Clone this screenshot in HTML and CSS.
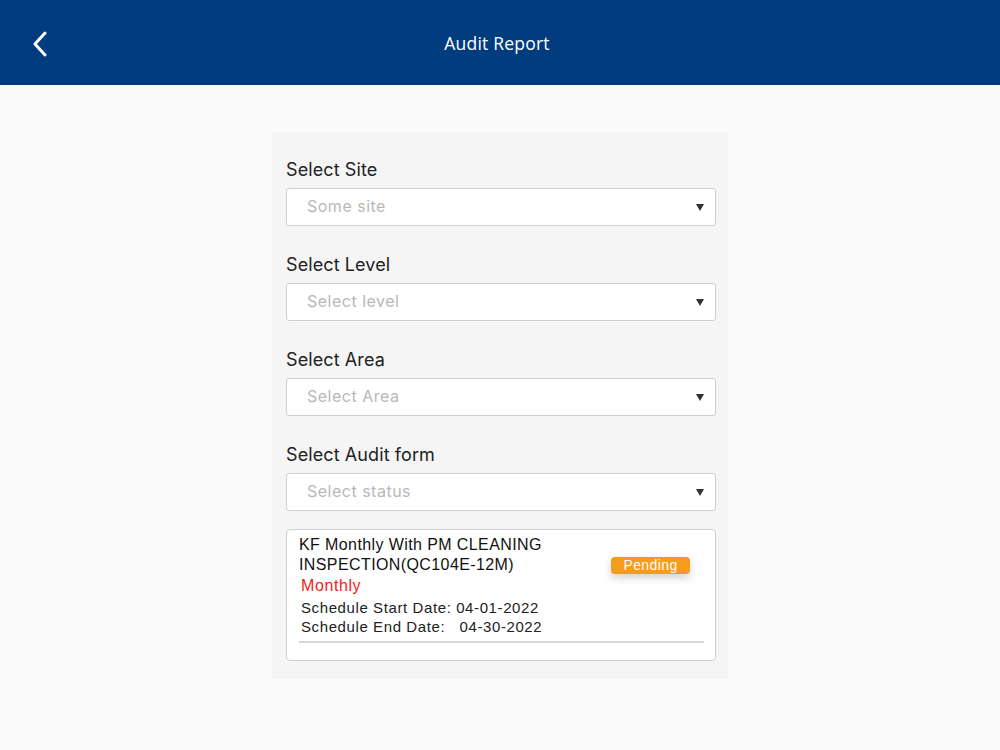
FILE: index.html
```html
<!doctype html>
<html lang="en">
  <head>
    <meta charset="UTF-8" />
    <meta name="viewport" content="width=device-width, initial-scale=1.0" />
    <title>Audit Report</title>
    <link rel="stylesheet" href="styles.css">
  </head>
  <body>
    <div class="app-header">
      <button class="back-btn" aria-label="Back">
        <svg width="16" height="26" viewBox="0 0 16 26">
          <path d="M13 2 L3 13 L13 24" fill="none" stroke="#fff" stroke-width="3" stroke-linecap="round" stroke-linejoin="round" />
        </svg>
      </button>
      <h1>Audit Report</h1>
      <span class="header-spacer"></span>
    </div>

    <div class="page">
      <div class="filter-panel">
        <div class="field">
          <label>Select Site</label>
          <div class="select-box">
            <span class="placeholder">Some site</span>
            <span class="caret"></span>
          </div>
        </div>
        <div class="field">
          <label>Select Level</label>
          <div class="select-box">
            <span class="placeholder">Select level</span>
            <span class="caret"></span>
          </div>
        </div>
        <div class="field">
          <label>Select Area</label>
          <div class="select-box">
            <span class="placeholder">Select Area</span>
            <span class="caret"></span>
          </div>
        </div>
        <div class="field">
          <label>Select Audit form</label>
          <div class="select-box">
            <span class="placeholder">Select status</span>
            <span class="caret"></span>
          </div>
        </div>

        <div class="audit-card">
          <div class="audit-row">
            <div class="audit-info">
              <div class="audit-title">KF Monthly With PM CLEANING INSPECTION(QC104E-12M)</div>
              <div class="audit-freq">Monthly</div>
              <div class="audit-date">Schedule Start Date: 04-01-2022</div>
              <div class="audit-date">Schedule End Date:&nbsp;&nbsp; 04-30-2022</div>
            </div>
            <span class="status-badge">Pending</span>
          </div>
          <div class="audit-divider"></div>
        </div>
      </div>
    </div>
  </body>
</html>
```

FILE: styles.css
```css
body {
  margin: 0;
  background-color: #fafafa;
  font-family: 'Inter', 'Open Sans', sans-serif;
}

.app-header {
  height: 85px;
  background-color: #003c7e;
  display: flex;
  align-items: center;
  padding: 0 28px;
  box-sizing: border-box;
}

.app-header h1 {
  flex-grow: 1;
  margin: 0;
  text-align: center;
  color: #fff;
  font-size: 17.5px;
  font-weight: 400;
  font-family: 'Open Sans', sans-serif;
  letter-spacing: 0.2px;
  padding-right: 6px;
}

.back-btn {
  width: 24px;
  height: 30px;
  padding: 0;
  border: none;
  background: none;
  display: flex;
  align-items: center;
  justify-content: center;
  margin-top: 2px;
}

.header-spacer {
  width: 24px;
}

.page {
  display: flex;
  justify-content: center;
  padding-top: 47px;
}

.filter-panel {
  width: 456px;
  box-sizing: border-box;
  background-color: #f5f5f5;
  padding: 25px 12px 18px 14px;
}

.field {
  margin-bottom: 26px;
}

.field label {
  display: block;
  height: 24px;
  line-height: 26px;
  font-size: 18px;
  color: #222;
  margin-bottom: 7px;
  letter-spacing: 0.1px;
}

.select-box {
  height: 38px;
  box-sizing: border-box;
  background-color: #fff;
  border: 1px solid #cfcfcf;
  border-radius: 3px;
  display: flex;
  align-items: center;
  padding: 0 11px 0 20px;
}

.placeholder {
  flex-grow: 1;
  color: #b8b8b8;
  font-size: 16px;
  letter-spacing: 0.5px;
  margin-top: -2px;
}

.caret {
  width: 0;
  height: 0;
  border-left: 4.5px solid transparent;
  border-right: 4.5px solid transparent;
  border-top: 7px solid #333;
  margin-top: 1px;
}

.field:nth-of-type(4) {
  margin-bottom: 18px;
}

.audit-card {
  background-color: #fff;
  border: 1px solid #cfcfcf;
  border-radius: 4px;
  padding: 5px 11px 17px 12px;
  font-family: 'Liberation Sans', Arial, sans-serif;
}

.audit-row {
  display: flex;
  align-items: flex-start;
}

.audit-info {
  flex-grow: 1;
}

.audit-title {
  width: 270px;
  font-size: 16px;
  line-height: 20px;
  color: #111;
  letter-spacing: 0.4px;
}

.audit-freq {
  color: #f41c1c;
  font-size: 16px;
  line-height: 21px;
  padding-left: 2px;
  letter-spacing: 0.6px;
}

.audit-freq + .audit-date {
  margin-top: 2px;
}

.audit-date {
  font-size: 15px;
  line-height: 19px;
  color: #222;
  padding-left: 2px;
  letter-spacing: 0.6px;
}

.status-badge {
  margin-top: 22px;
  margin-right: 14px;
  width: 79px;
  height: 17px;
  line-height: 17px;
  text-align: center;
  background-color: #f39c1d;
  color: #fff;
  font-size: 14px;
  letter-spacing: 0.4px;
  border-radius: 4px;
  box-shadow: 0 4px 8px rgba(0, 0, 0, 0.18);
}

.audit-divider {
  height: 2px;
  background-color: #d6d6d6;
  margin-top: 5px;
}
```
